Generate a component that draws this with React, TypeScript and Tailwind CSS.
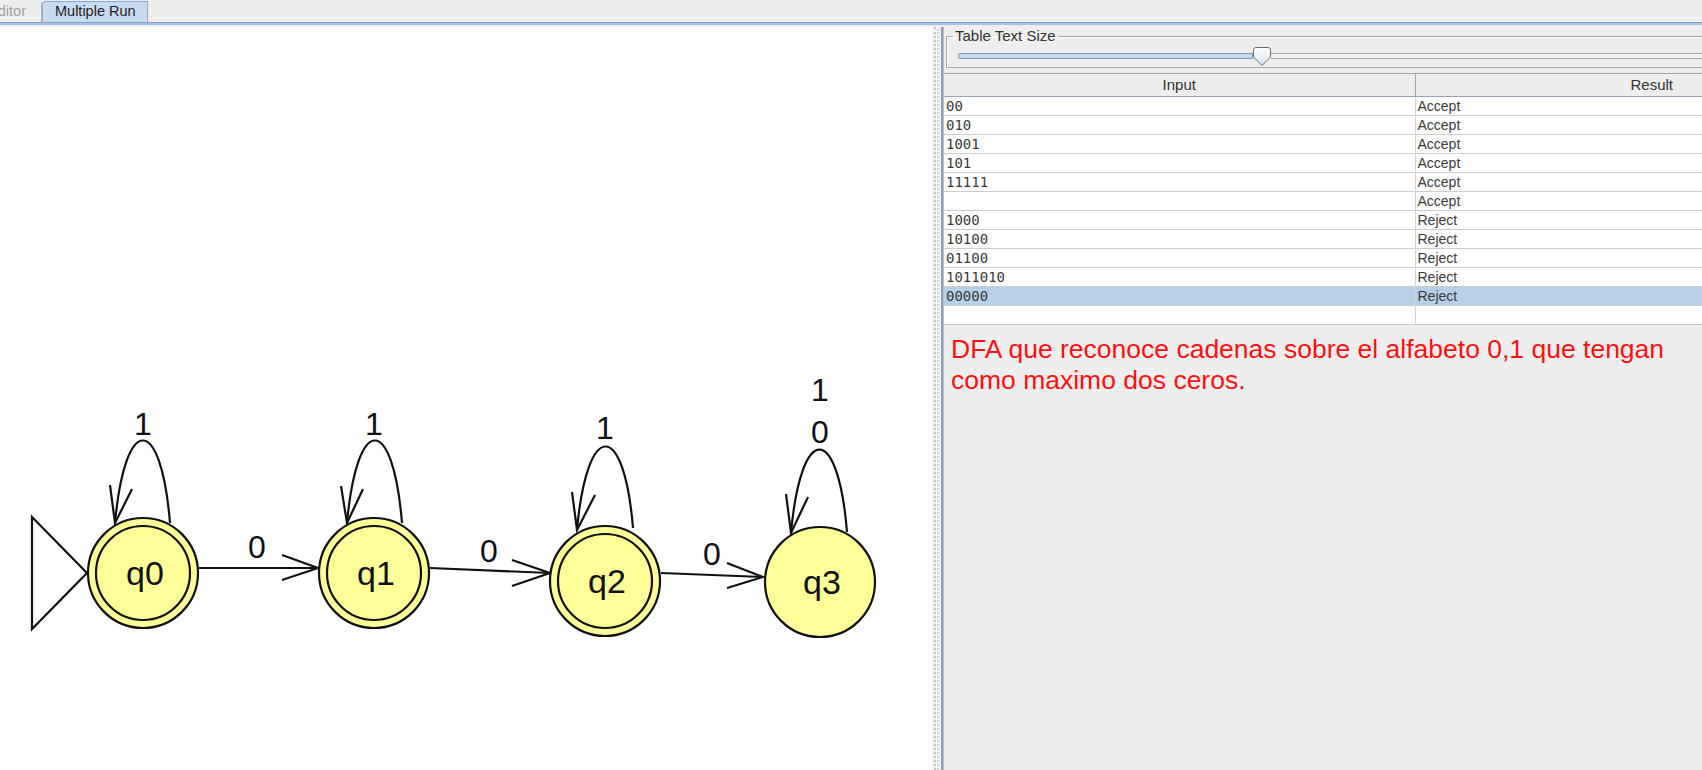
import React from "react";

const rows: [string, string][] = [
  ["00", "Accept"],
  ["010", "Accept"],
  ["1001", "Accept"],
  ["101", "Accept"],
  ["11111", "Accept"],
  ["", "Accept"],
  ["1000", "Reject"],
  ["10100", "Reject"],
  ["01100", "Reject"],
  ["1011010", "Reject"],
  ["00000", "Reject"],
  ["", ""],
];

const states = [
  { id: "q0", x: 143, y: 573, final: true },
  { id: "q1", x: 374, y: 573, final: true },
  { id: "q2", x: 605, y: 581, final: true },
  { id: "q3", x: 820, y: 582, final: false },
];

// self loops: right foot, left foot (arrow tip), control height, arrow wings
const loops = [
  { r: [170, 523], l: [115, 523], c: 413, w1: [110, 485], w2: [132, 489] },
  { r: [402, 523], l: [347, 523], c: 413, w1: [341, 486], w2: [363, 489] },
  { r: [633, 528], l: [577, 530], c: 419, w1: [572, 492], w2: [595, 495] },
  { r: [847, 532], l: [791, 533], c: 422, w1: [786, 494], w2: [808, 497] },
];

const edges = [
  { from: [199, 568], to: [318, 568], w1: [282, 555], w2: [282, 580] },
  { from: [430, 568], to: [550, 573], w1: [512, 560], w2: [512, 586] },
  { from: [661, 573], to: [763, 577], w1: [727, 563], w2: [727, 588] },
];

const labels = [
  { t: "1", x: 143, y: 435 },
  { t: "1", x: 374, y: 435 },
  { t: "1", x: 605, y: 439 },
  { t: "1", x: 820, y: 401 },
  { t: "0", x: 820, y: 443 },
  { t: "0", x: 257, y: 558 },
  { t: "0", x: 489, y: 562 },
  { t: "0", x: 712, y: 565 },
];

function Diagram() {
  return (
    <svg width="932" height="743" viewBox="0 27 932 743" fontFamily="'Liberation Sans', Arial, sans-serif">
      <polygon points="32,517 87,573 32,629" fill="#fff" stroke="#111" strokeWidth="2.2" />
      {loops.map((l, i) => (
        <g key={i} fill="none" stroke="#111" strokeWidth="2.2">
          <path d={`M${l.r[0]} ${l.r[1]} C ${l.r[0] - 9} ${l.c}, ${l.l[0] + 10} ${l.c}, ${l.l[0]} ${l.l[1]}`} />
          <polyline points={`${l.w1[0]},${l.w1[1]} ${l.l[0]},${l.l[1]} ${l.w2[0]},${l.w2[1]}`} />
        </g>
      ))}
      {edges.map((e, i) => (
        <g key={i} fill="none" stroke="#111" strokeWidth="2.2">
          <line x1={e.from[0]} y1={e.from[1]} x2={e.to[0]} y2={e.to[1]} />
          <polyline points={`${e.w1[0]},${e.w1[1]} ${e.to[0]},${e.to[1]} ${e.w2[0]},${e.w2[1]}`} />
        </g>
      ))}
      {states.map((s) => (
        <g key={s.id}>
          <circle cx={s.x} cy={s.y} r="55" fill="#ffff99" stroke="#111" strokeWidth="2.2" />
          {s.final && <circle cx={s.x} cy={s.y} r="47" fill="none" stroke="#111" strokeWidth="2.2" />}
          <text x={s.x + 2} y={s.y + 12} textAnchor="middle" fontSize="34" fill="#111">
            {s.id}
          </text>
        </g>
      ))}
      {labels.map((l, i) => (
        <text key={i} x={l.x} y={l.y} textAnchor="middle" fontSize="32" fill="#111">
          {l.t}
        </text>
      ))}
    </svg>
  );
}

function Thumb() {
  return (
    <svg width="18" height="19" viewBox="0 0 18 19" className="shrink-0">
      <defs>
        <linearGradient id="tg" x1="0" y1="0" x2="0" y2="1">
          <stop offset="0" stopColor="#ffffff" />
          <stop offset="1" stopColor="#d3e0f1" />
        </linearGradient>
      </defs>
      <path d="M3 0.5 H15 Q17.5 0.5 17.5 3 V10 L9 18.5 L0.5 10 V3 Q0.5 0.5 3 0.5 Z" fill="url(#tg)" stroke="#6b6b6b" strokeWidth="1" />
    </svg>
  );
}

export default function App() {
  return (
    <div className="w-[1702px] h-[770px] overflow-hidden bg-[#eeeeee] flex flex-col font-['Liberation_Sans',Arial,sans-serif]">
      <div className="h-[22px] flex items-end shrink-0">
        <div className="h-[20px] w-[42px] flex items-center justify-end pr-[15px] border-r border-[#a9b6c6] text-[14.5px] text-[#a0a0a0] overflow-hidden whitespace-nowrap">
          Editor
        </div>
        <div className="h-[21px] w-[106px] flex items-center pl-[12px] bg-[#c8dbf1] border-x border-t border-[#8ea8cc] rounded-tl-[4px] text-[14.5px] text-[#222]">
          Multiple Run
        </div>
      </div>
      <div className="h-[3px] shrink-0 bg-[#a9c1e6] border-t border-[#7f9fd3]" />
      <div className="h-[2px] shrink-0 bg-[#eeeeee]" />
      <div className="flex flex-1 min-h-0">
        <div className="w-[932px] bg-white shrink-0 overflow-hidden">
          <Diagram />
        </div>
        <div className="w-[9px] shrink-0 bg-[#f3f3f3] flex justify-center gap-[1px]">
          <div className="w-[2px] border-l-2 border-dotted border-[#c4c4c4]" />
          <div className="w-[2px] border-l-2 border-dotted border-[#d4d4d4] mt-[2px]" />
        </div>
        <div className="w-[3px] shrink-0 bg-[#8d9cb0] border-r border-[#b6c2d2]" />
        <div className="flex-1 min-w-0 overflow-hidden flex flex-col">
          <fieldset className="ml-[2px] w-[900px] border border-[#a8a8a8] shadow-[inset_1px_1px_0_#ffffff] pl-[11px] pt-[2px] pb-[2px] shrink-0">
            <legend className="-ml-[5px] px-[2px] leading-[18px] text-[15px] text-[#333]">Table Text Size</legend>
            <div className="flex items-start h-[18px]">
              <div className="w-[295px] h-[6px] mt-[6px] bg-[#c6d8ef] border border-[#7c9ac4] rounded-l-[2px]" />
              <Thumb />
              <div className="flex-1 h-[6px] mt-[6px] border-y border-[#a3a3a3] bg-[#f2f2f2]" />
            </div>
          </fieldset>
          <table className="mt-[5px] table-fixed w-[944px] border-collapse text-[#333] shrink-0">
            <colgroup>
              <col className="w-[471px]" />
              <col className="w-[473px]" />
            </colgroup>
            <thead>
              <tr className="h-[23px] bg-[#eeeeee] border-t border-b border-t-[#a5a5a5] border-b-[#98a4b5]">
                <th className="p-0 font-normal text-[15px] leading-[20px] border-r border-[#a5a5a5]">Input</th>
                <th className="p-0 font-normal text-[15px] leading-[20px]">Result</th>
              </tr>
            </thead>
            <tbody>
              {rows.map(([input, result], i) => (
                <tr
                  key={i}
                  className={`h-[19px] border-b border-[#cdcdcd] ${i === 10 ? "bg-[#b8cfe5]" : "bg-white"}`}
                >
                  <td className="p-0 pl-[2px] leading-[17px] text-[14px] font-['DejaVu_Sans_Mono',monospace] text-[#3a3a3a] border-r border-[#d3d3d3]">
                    {input}
                  </td>
                  <td className="p-0 pl-[2px] leading-[17px] text-[14px] text-[#3a3a3a]">{result}</td>
                </tr>
              ))}
            </tbody>
          </table>
          <p className="mt-[9px] pl-[7px] text-[26.5px] leading-[31px] text-[#ff1010]">
            DFA que reconoce cadenas sobre el alfabeto 0,1 que tengan
            <br />
            como maximo dos ceros.
          </p>
        </div>
      </div>
    </div>
  );
}
